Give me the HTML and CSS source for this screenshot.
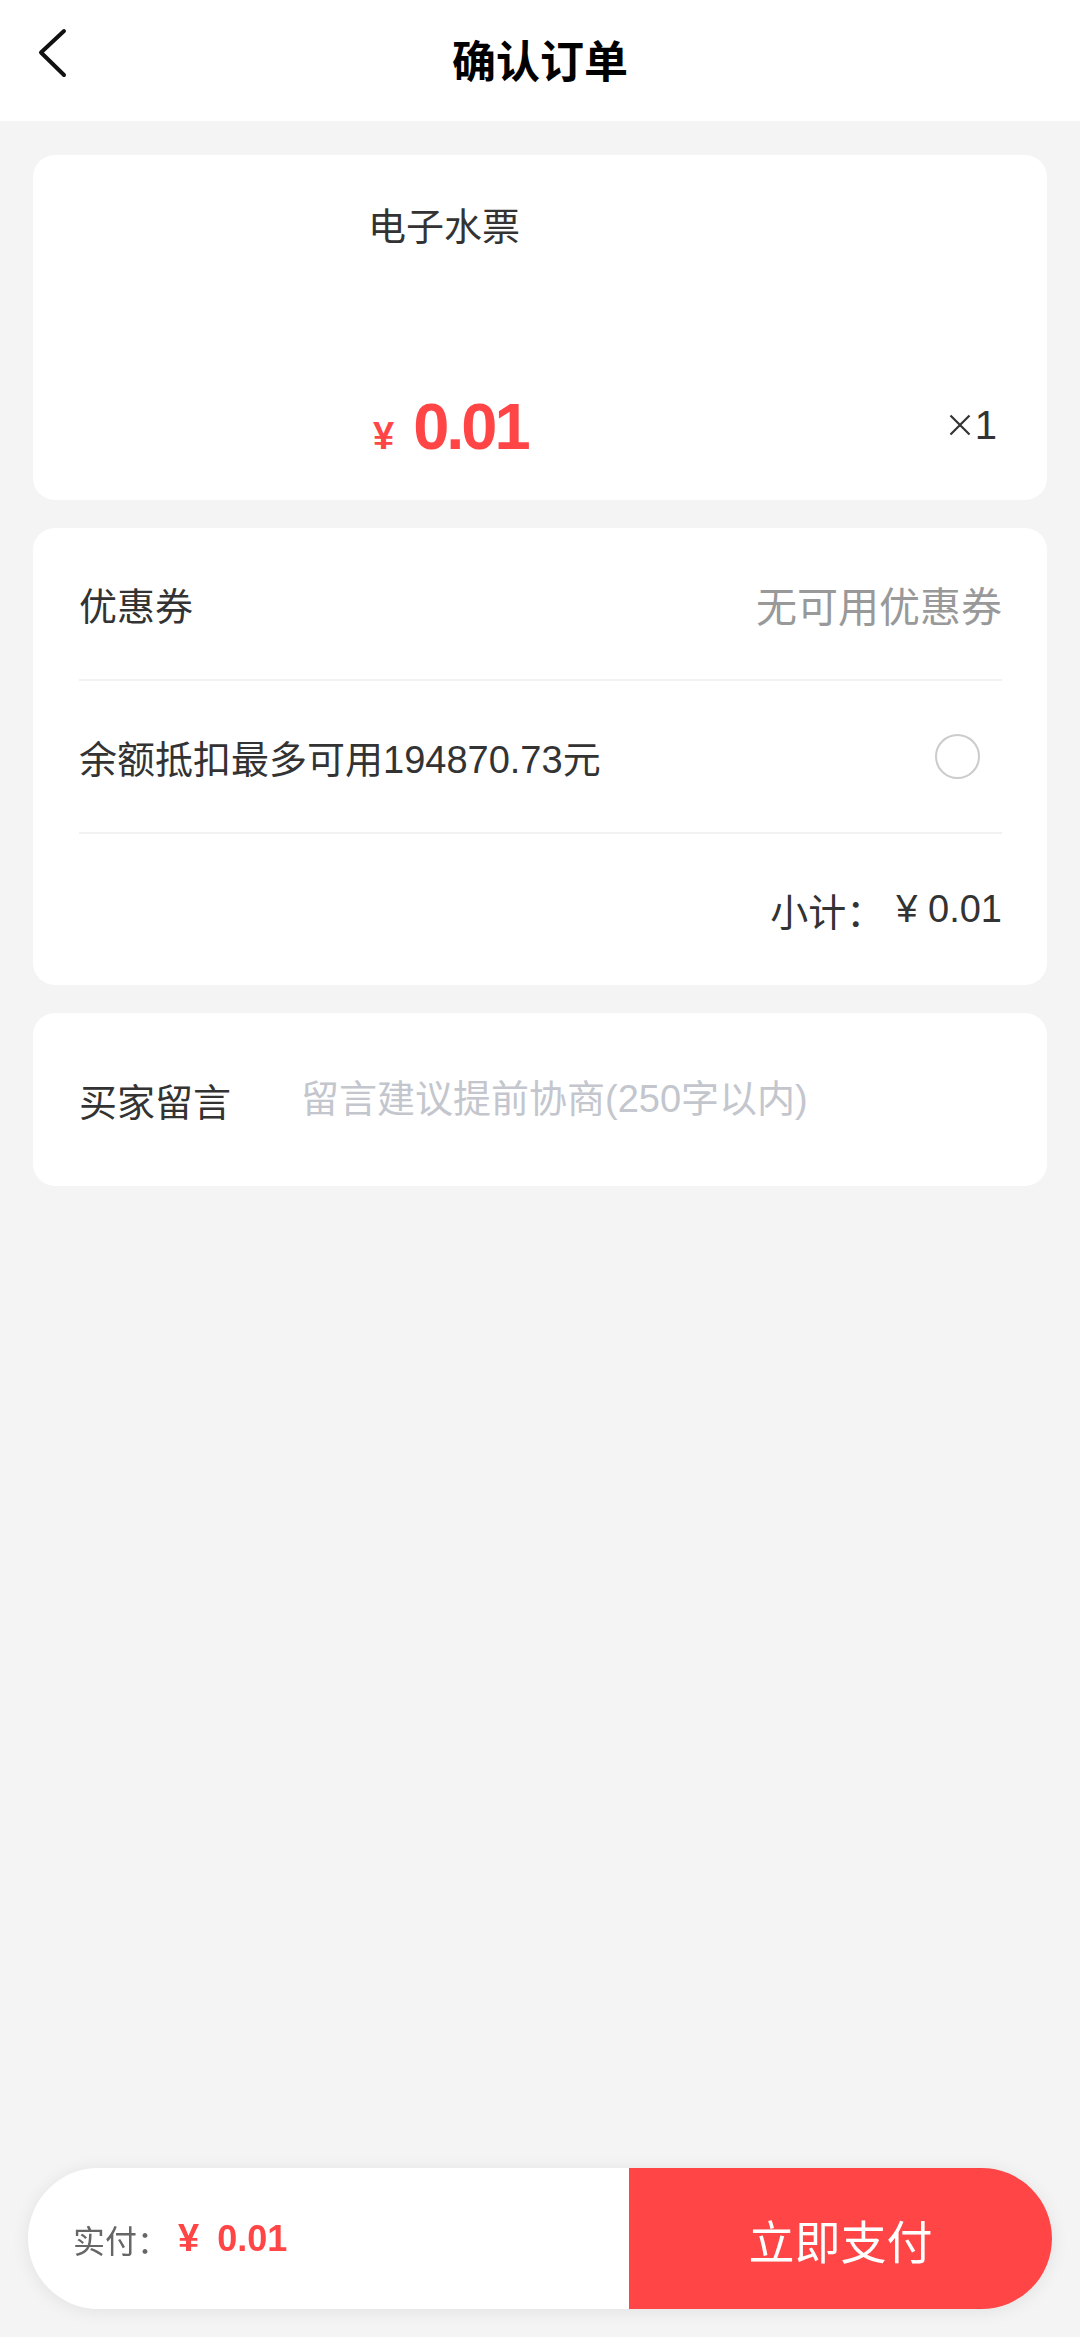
FILE: index.html
```html
<!DOCTYPE html>
<html lang="zh-CN">
<head>
    <meta charset="UTF-8">
    <meta name="viewport" content="width=device-width, initial-scale=1.0">
    <title>确认订单</title>
    <link rel="stylesheet" href="styles.css">
</head>
<body>
    <header class="topbar">
        <a class="back" href="#">
            <svg width="32" height="52" viewBox="0 0 32 52">
                <path d="M28 4 L5 25.5 L28 48" fill="none" stroke="#111" stroke-width="4" stroke-linecap="round" stroke-linejoin="round"/>
            </svg>
        </a>
        <h1>确认订单</h1>
        <span></span>
    </header>

    <main class="page">
        <section class="card goods">
            <div class="goods-pic"></div>
            <div class="goods-info">
                <h3>电子水票</h3>
                <div class="goods-bottom">
                    <div class="price"><span class="yen">¥</span>0.01</div>
                    <div class="qty">
                        <svg class="times" width="22" height="22" viewBox="0 0 22 22">
                            <path d="M1.5 1.5 L20.5 20.5 M20.5 1.5 L1.5 20.5" stroke="#333" stroke-width="2.2" fill="none"/>
                        </svg>1
                    </div>
                </div>
            </div>
        </section>

        <section class="card list">
            <div class="row">
                <span>优惠券</span>
                <span class="muted">无可用优惠券</span>
            </div>
            <div class="row">
                <span>余额抵扣最多可用194870.73元</span>
                <span class="radio"></span>
            </div>
            <div class="row row-end">
                <span>小计：</span><span class="subtotal">¥ 0.01</span>
            </div>
        </section>

        <section class="card remark">
            <span class="remark-label">买家留言</span>
            <input class="remark-input" type="text" placeholder="留言建议提前协商(250字以内)">
        </section>
    </main>

    <footer class="paybar">
        <div class="paybar-total">
            <span class="paybar-label">实付：</span>
            <span class="paybar-yen">¥</span>
            <span class="paybar-price">0.01</span>
        </div>
        <button class="paybar-btn">立即支付</button>
    </footer>
</body>
</html>
```

FILE: styles.css
```css
body {
  font-family: 'Liberation Sans', 'Noto Sans CJK SC', sans-serif;
  margin: 0;
  padding: 0;
  background: #f4f4f4;
  color: #333;
  min-height: 2337px;
}
.topbar {
  height: 121px;
  background: #fff;
  display: grid;
  grid-template-columns: 130px 1fr 130px;
  align-items: center;
}
.back {
  align-self: start;
  margin: 27px 0 0 36px;
  display: block;
  width: 32px;
  height: 52px;
}
.topbar h1 {
  margin: 0;
  text-align: center;
  font-size: 44px;
  font-weight: bold;
  color: #000;
  line-height: 1;
  padding-top: 4px;
}
.page {
  padding: 34px 33px 0;
  display: flex;
  flex-direction: column;
  gap: 28px;
}
.card {
  background: #fff;
  border-radius: 22px;
}
.goods {
  display: flex;
  height: 345px;
  box-sizing: border-box;
  padding: 44px 50px 41px 33px;
  gap: 32px;
}
.goods-pic {
  width: 270px;
  flex-shrink: 0;
}
.goods-info {
  flex: 1;
  display: flex;
  flex-direction: column;
  justify-content: space-between;
}
.goods-info h3 {
  margin: 0;
  font-size: 38px;
  font-weight: normal;
  line-height: 57px;
  color: #333;
}
.goods-bottom {
  display: flex;
  justify-content: space-between;
  align-items: flex-end;
  line-height: 1;
}
.price {
  color: #ff4545;
  font-size: 65px;
  font-weight: bold;
  letter-spacing: -3px;
  margin-left: 5px;
}
.yen {
  font-size: 38px;
  margin-right: 19px;
  letter-spacing: 0;
}
.qty {
  font-size: 40px;
  color: #333;
  display: flex;
  align-items: center;
  gap: 4px;
  margin-bottom: 14px;
}
.list {
  padding: 0 45px 0 46px;
}
.row {
  height: 151px;
  display: flex;
  align-items: center;
  justify-content: space-between;
  font-size: 38px;
  border-bottom: 2px solid #f2f2f2;
}
.row:last-child {
  border-bottom: none;
}
.row-end {
  justify-content: flex-end;
}
.subtotal {
  margin-left: 12px;
}
.muted {
  color: #999;
  font-size: 41px;
}
.radio {
  width: 41px;
  height: 41px;
  border: 2px solid #ccc;
  border-radius: 50%;
  margin-right: 22px;
}
.remark {
  height: 173px;
  display: flex;
  align-items: center;
  padding: 0 46px;
  gap: 70px;
}
.remark-label {
  font-size: 38px;
  color: #333;
  flex-shrink: 0;
}
.remark-input {
  flex: 1;
  border: none;
  outline: none;
  padding: 0;
  font-family: inherit;
  font-size: 38px;
  color: #333;
  background: transparent;
}
.remark-input::placeholder {
  color: #c3c6cd;
}
.paybar {
  position: fixed;
  left: 28px;
  right: 28px;
  bottom: 28px;
  height: 141px;
  display: flex;
  border-radius: 71px;
  overflow: hidden;
  background: #fff;
  box-shadow: 0 2px 18px rgba(0,0,0,0.08);
}
.paybar-total {
  flex: 1;
  display: flex;
  align-items: center;
  padding-left: 45px;
}
.paybar-label {
  font-size: 32px;
  color: #666;
}
.paybar-yen {
  font-size: 38px;
  font-weight: bold;
  color: #ff4545;
  margin-left: 9px;
}
.paybar-price {
  font-size: 36px;
  font-weight: bold;
  color: #ff4545;
  margin-left: 18px;
}
.paybar-btn {
  width: 423px;
  border: none;
  background: #ff4545;
  color: #fff;
  font-family: inherit;
  font-size: 46px;
  cursor: pointer;
}
```
